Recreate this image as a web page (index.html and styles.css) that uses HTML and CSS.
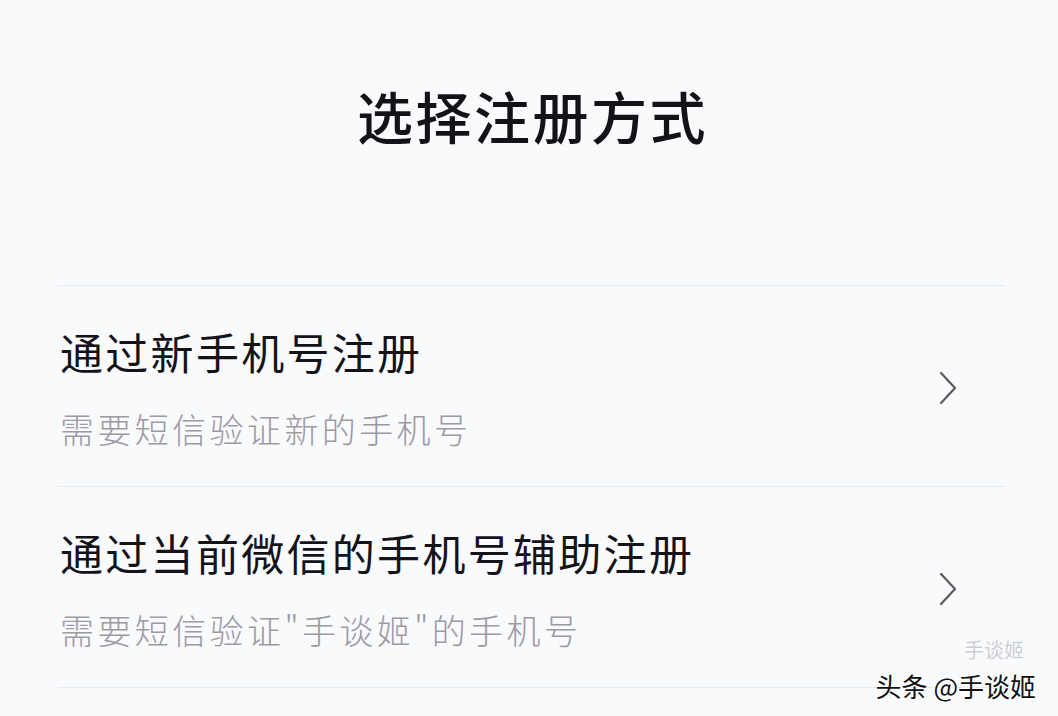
FILE: index.html
```html
<!DOCTYPE html>
<html lang="zh-CN">
<head>
  <meta charset="UTF-8">
  <title>选择注册方式</title>
  <link rel="stylesheet" href="styles.css">
</head>
<body>

<div class="page">
  <header class="page-head">
    <h1>选择注册方式</h1>
  </header>

  <!-- 注册方式列表 -->
  <ul class="options">
    <li class="option">
      <div class="option-text">
        <div class="option-title">通过新手机号注册</div>
        <div class="option-desc">需要短信验证新的手机号</div>
      </div>
      <svg class="chevron" width="18" height="34" viewBox="0 0 18 34">
        <polyline points="2,2 16,17 2,32" fill="none" stroke="#5b5a60" stroke-width="2.2" stroke-linecap="round" stroke-linejoin="round"/>
      </svg>
    </li>
    <li class="option">
      <div class="option-text">
        <div class="option-title">通过当前微信的手机号辅助注册</div>
        <div class="option-desc">需要短信验证"手谈姬"的手机号</div>
      </div>
      <svg class="chevron" width="18" height="34" viewBox="0 0 18 34">
        <polyline points="2,2 16,17 2,32" fill="none" stroke="#5b5a60" stroke-width="2.2" stroke-linecap="round" stroke-linejoin="round"/>
      </svg>
    </li>
  </ul>
</div>

<!-- 水印 -->
<div class="mark">
  <span class="mark-faint">手谈姬</span>
  <span class="mark-main">头条 @手谈姬</span>
</div>

</body>
</html>
```

FILE: styles.css
```css
html, body {
  margin: 0;
  padding: 0;
  background-color: #f9fafc;
  font-family: "Noto Sans CJK SC", "Noto Sans", sans-serif;
  overflow: hidden;
}

.page {
  width: 1058px;
  height: 716px;
  box-sizing: border-box;
  padding: 0 53px 0 58px;
}

.page-head {
  height: 285px;
  box-sizing: border-box;
  padding-top: 80px;
  text-align: center;
}

.page-head h1 {
  margin: 0;
  font-size: 56px;
  line-height: 70px;
  font-weight: 500;
  letter-spacing: 2.5px;
  color: #141217;
  padding-left: 2px;
}

.options {
  list-style: none;
  margin: 0;
  padding: 0;
}

.option {
  display: flex;
  align-items: center;
  border-top: 1px solid #e7eaef;
  padding: 41px 0 37px 2px;
}

.option:last-child {
  border-bottom: 1px solid #e7eaef;
}

.option-text {
  flex: 1;
}

.option-title {
  font-size: 43px;
  line-height: 48px;
  letter-spacing: 2.3px;
  color: #15131a;
}

.option-desc {
  margin-top: 34px;
  font-size: 34px;
  line-height: 40px;
  letter-spacing: 3.4px;
  color: #9d99a5;
  font-weight: 300;
}

.chevron {
  margin-right: 48px;
}

.mark {
  position: absolute;
  right: 22px;
  bottom: 16px;
  width: 180px;
  height: 64px;
}

.mark-faint {
  position: absolute;
  right: 12px;
  top: 4px;
  font-size: 20px;
  line-height: 20px;
  color: rgba(120, 120, 130, 0.35);
}

.mark-main {
  position: absolute;
  right: 0;
  bottom: 0;
  font-size: 26px;
  line-height: 28px;
  color: #111;
  white-space: nowrap;
  text-shadow: 1px 1px 0 #fff, -1px -1px 0 #fff, 1px -1px 0 #fff, -1px 1px 0 #fff;
}
```
